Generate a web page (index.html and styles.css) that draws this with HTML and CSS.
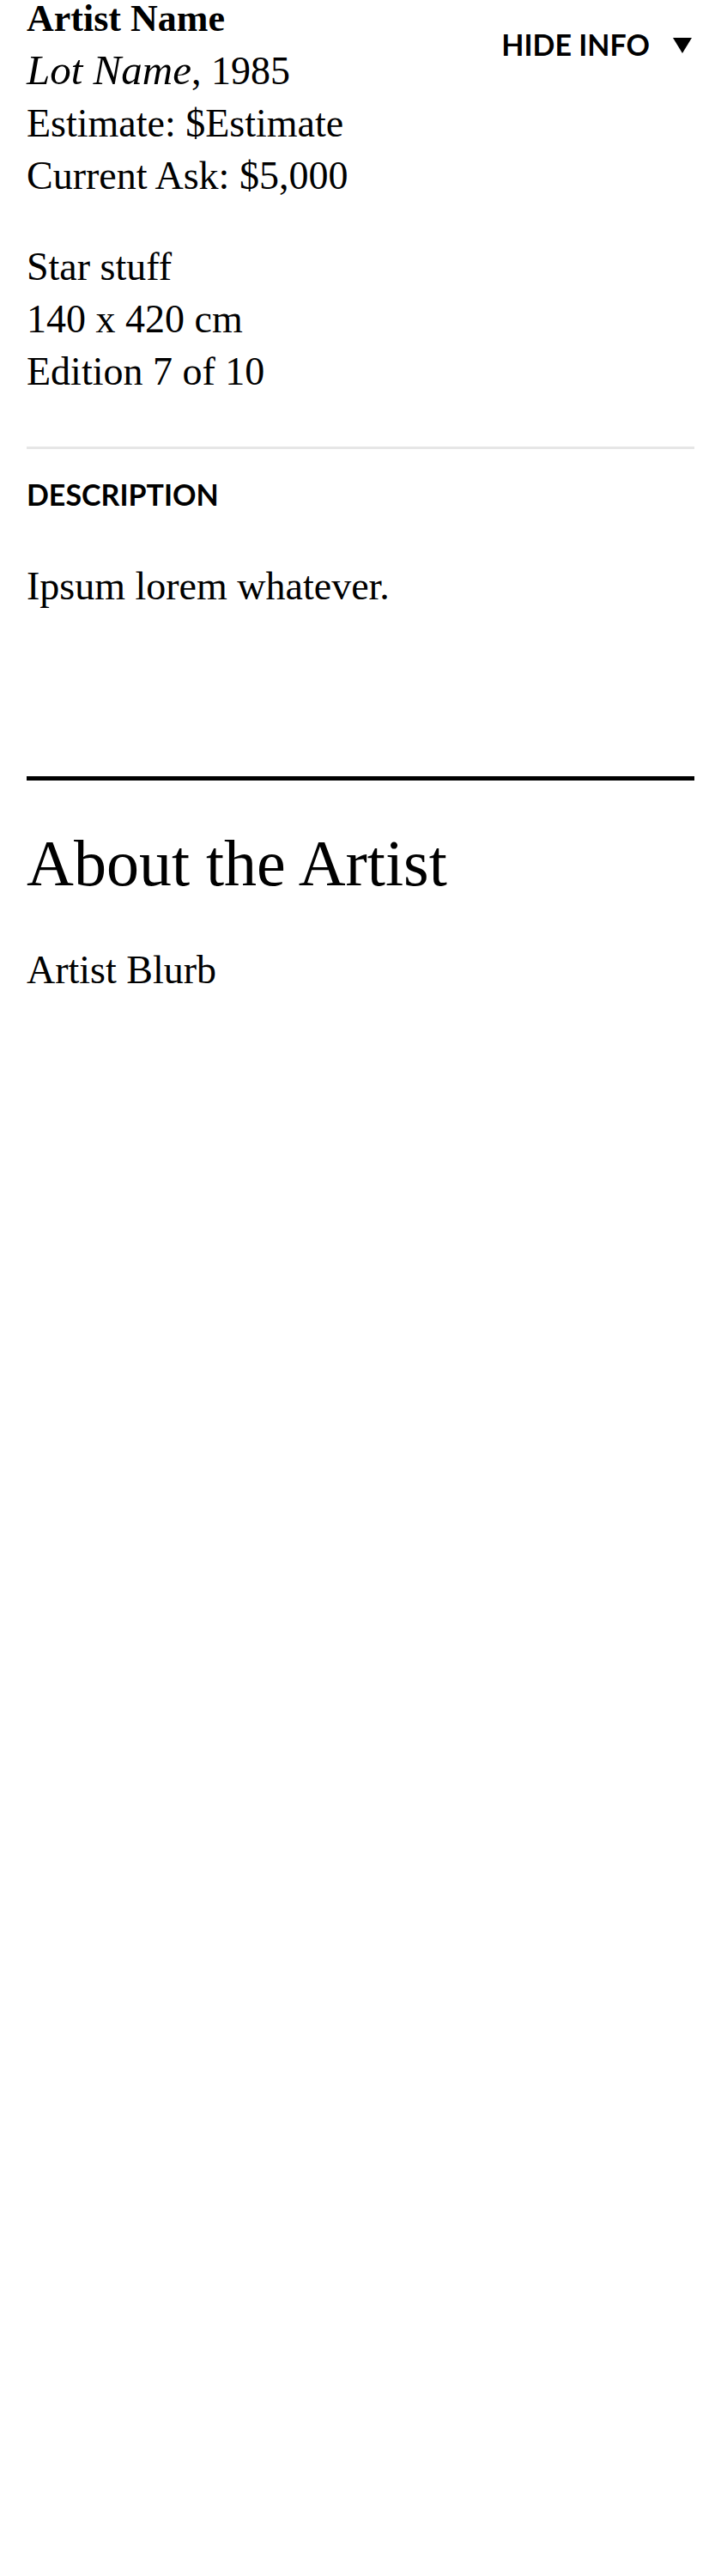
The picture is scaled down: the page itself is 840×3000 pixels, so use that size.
FILE: index.html
```html
<!DOCTYPE html>
<html lang="en">
<head>
<meta charset="utf-8">
<title>Lot</title>
<link rel="stylesheet" href="styles.css">
</head>
<body>
<main class="lot">
  <section class="lot-info">
    <div class="info-head">
      <div class="info-main">
        <p class="meta"><strong class="artist">Artist Name</strong><br><em class="lot-name">Lot Name</em>, 1985<br>Estimate: $Estimate<br>Current Ask: $5,000</p>
        <p class="meta">Star stuff<br>140 x 420 cm<br>Edition 7 of 10</p>
      </div>
      <button class="toggle" type="button">
        <span class="toggle-label">HIDE INFO</span>
        <svg class="caret" width="24" height="18" viewBox="0 0 24 18" aria-hidden="true"><polygon points="1,0 23,0 12,18" fill="#000"/></svg>
      </button>
    </div>
    <hr class="rule-light">
    <h3 class="label">DESCRIPTION</h3>
    <p class="body-text">Ipsum lorem whatever.</p>
  </section>
  <section class="about">
    <h2 class="about-title">About the Artist</h2>
    <p class="body-text">Artist Blurb</p>
  </section>
</main>
</body>
</html>
```

FILE: styles.css
```css
html, body {
  margin: 0;
  padding: 0;
  background: #fff;
  color: #000;
}

body {
  font-family: "Liberation Serif", "Times New Roman", serif;
  font-size: 46px;
  line-height: 61px;
}

.lot {
  padding: 0 31px;
  margin-top: -10px;
}

.info-head {
  display: flex;
  justify-content: space-between;
  align-items: flex-start;
}

.meta {
  margin: 0 0 45px;
}

.meta:last-child {
  margin-bottom: 0;
}

.artist {
  font-weight: 700;
  font-size: 44px;
}

.lot-name {
  font-size: 49px;
  line-height: 1;
}

.toggle {
  display: flex;
  align-items: center;
  gap: 26px;
  margin: 42px 2px 0 0;
  padding: 0;
  border: 0;
  background: none;
  color: #000;
  font-family: "Lato", "Liberation Sans", sans-serif;
  font-weight: 700;
  font-size: 34px;
  line-height: 1.2;
  cursor: pointer;
}

.caret {
  display: block;
  margin-top: 2px;
}

.rule-light {
  margin: 57px 0 0;
  border: 0;
  height: 3px;
  background: #e6e6e6;
}

.label {
  margin: 33px 0 0;
  font-family: "Lato", "Liberation Sans", sans-serif;
  font-weight: 700;
  font-size: 34px;
  line-height: 1.2;
}

.body-text {
  margin: 55px 0 0;
}

.about {
  margin-top: 191px;
  border-top: 5px solid #000;
}

.about-title {
  margin: 51px 0 0;
  font-weight: 400;
  font-size: 76px;
  line-height: 90px;
}

.about .body-text {
  margin-top: 49px;
}
```
